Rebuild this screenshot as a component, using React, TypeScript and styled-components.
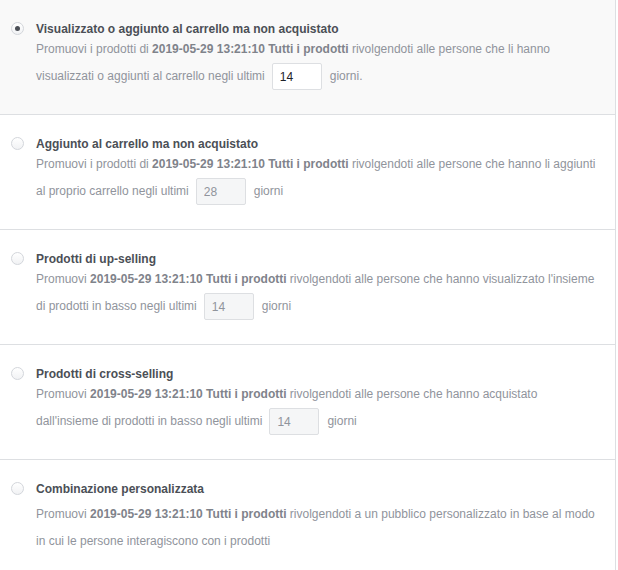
import React from "react";
import styled, { createGlobalStyle } from "styled-components";

const Global = createGlobalStyle`
  html, body {
    margin: 0;
    padding: 0;
    background: #ffffff;
  }
  body {
    font-family: "Liberation Sans", Arial, Helvetica, sans-serif;
  }
`;

const List = styled.div`
  width: 615px;
  border-right: 1px solid #dddfe2;
`;

const Option = styled.label<{ $active?: boolean }>`
  display: flex;
  align-items: flex-start;
  gap: 12px;
  padding: 22px 15px 24px 11px;
  background: ${(p) => (p.$active ? "#f9f9f9" : "#ffffff")};
  border-bottom: 1px solid #dddfe2;
  cursor: pointer;
`;

const Radio = styled.span<{ $checked?: boolean }>`
  flex: none;
  position: relative;
  width: 13px;
  height: 13px;
  border-radius: 50%;
  box-sizing: border-box;
  border: 1px solid #d3d6db;
  background: linear-gradient(#ffffff, #f1f2f4);

  &::after {
    content: "";
    display: ${(p) => (p.$checked ? "block" : "none")};
    position: absolute;
    left: 3px;
    top: 3px;
    width: 5px;
    height: 5px;
    border-radius: 50%;
    background: #4b4f56;
  }
`;

const Body = styled.div`
  flex: 1;
  min-width: 0;
`;

const Title = styled.div`
  font-size: 12px;
  line-height: 14px;
  font-weight: bold;
  color: #4b4f56;
`;

const Desc = styled.p<{ $plain?: boolean }>`
  margin: ${(p) => (p.$plain ? "5px 0 0" : "0")};
  font-size: 12px;
  line-height: 27px;
  color: #90949c;

  b {
    color: #7f838b;
  }
`;

const Days = styled.input<{ $enabled?: boolean }>`
  box-sizing: border-box;
  width: 50px;
  height: 27px;
  margin: 0 8px 0 7px;
  padding: 0 7px;
  vertical-align: top;
  border: 1px solid #dddfe2;
  border-radius: 2px;
  font-family: inherit;
  font-size: 12px;
  color: ${(p) => (p.$enabled ? "#1d2129" : "#90949c")};
  background: ${(p) => (p.$enabled ? "#ffffff" : "#f5f6f7")};
  outline: none;
`;

const stamp = "2019-05-29 13:21:10 Tutti i prodotti";

export default function App() {
  return (
    <>
      <Global />
      <List>
        <Option $active>
          <Radio $checked />
          <Body>
            <Title>Visualizzato o aggiunto al carrello ma non acquistato</Title>
            <Desc>
              Promuovi i prodotti di <b>{stamp}</b> rivolgendoti alle persone che li hanno
              visualizzati o aggiunti al carrello negli ultimi
              <Days $enabled defaultValue="14" />
              giorni.
            </Desc>
          </Body>
        </Option>

        <Option>
          <Radio />
          <Body>
            <Title>Aggiunto al carrello ma non acquistato</Title>
            <Desc>
              Promuovi i prodotti di <b>{stamp}</b> rivolgendoti alle persone che hanno li aggiunti
              al proprio carrello negli ultimi
              <Days disabled defaultValue="28" />
              giorni
            </Desc>
          </Body>
        </Option>

        <Option>
          <Radio />
          <Body>
            <Title>Prodotti di up-selling</Title>
            <Desc>
              Promuovi <b>{stamp}</b> rivolgendoti alle persone che hanno visualizzato l'insieme di
              prodotti in basso negli ultimi
              <Days disabled defaultValue="14" />
              giorni
            </Desc>
          </Body>
        </Option>

        <Option>
          <Radio />
          <Body>
            <Title>Prodotti di cross-selling</Title>
            <Desc>
              Promuovi <b>{stamp}</b> rivolgendoti alle persone che hanno acquistato dall'insieme di
              prodotti in basso negli ultimi
              <Days disabled defaultValue="14" />
              giorni
            </Desc>
          </Body>
        </Option>

        <Option>
          <Radio />
          <Body>
            <Title>Combinazione personalizzata</Title>
            <Desc $plain>
              Promuovi <b>{stamp}</b> rivolgendoti a un pubblico personalizzato in base al modo in cui
              le persone interagiscono con i prodotti
            </Desc>
          </Body>
        </Option>
      </List>
    </>
  );
}
